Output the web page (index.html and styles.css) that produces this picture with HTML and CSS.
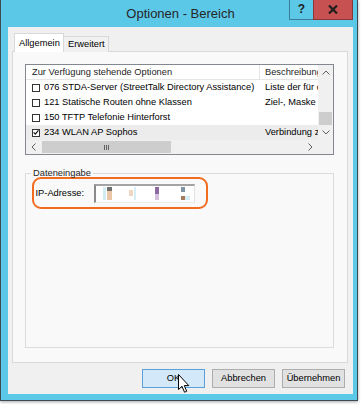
FILE: index.html
```html
<!DOCTYPE html>
<html lang="de">
<head>
<meta charset="utf-8">
<title>Optionen - Bereich</title>
<link rel="stylesheet" href="styles.css">
</head>
<body>
<div class="window">
  <div class="titlebar">
    <span class="title">Optionen - Bereich</span>
    <div class="caption">
      <div class="cap-help">?</div>
      <div class="cap-close">
        <svg width="10" height="9" viewBox="0 0 10 9"><path d="M1 0.5 L9 8.5 M9 0.5 L1 8.5" stroke="#1e1e1e" stroke-width="2.2"/></svg>
      </div>
    </div>
  </div>
  <div class="client">
    <div class="tabs">
      <div class="tab active">Allgemein</div>
      <div class="tab">Erweitert</div>
    </div>
    <div class="panel">
      <div class="list">
        <div class="list-main">
          <div class="lv-row lv-header">
            <div class="c1 hc">Zur Verfügung stehende Optionen</div>
            <div class="c2">Beschreibung</div>
          </div>
          <div class="lv-row">
            <div class="c1"><span class="cb"></span>076 STDA-Server (StreetTalk Directory Assistance)</div>
            <div class="c2">Liste der für die</div>
          </div>
          <div class="lv-row">
            <div class="c1"><span class="cb"></span>121 Statische Routen ohne Klassen</div>
            <div class="c2">Ziel-, Maske und</div>
          </div>
          <div class="lv-row">
            <div class="c1"><span class="cb"></span>150 TFTP Telefonie Hinterforst</div>
            <div class="c2"></div>
          </div>
          <div class="lv-row sel">
            <div class="c1"><span class="cb checked"><svg width="7" height="7" viewBox="0 0 7 7"><path d="M0.8 3.4 L2.7 5.4 L6.3 1" stroke="#111" stroke-width="1.4" fill="none"/></svg></span>234 WLAN AP Sophos</div>
            <div class="c2">Verbindung zum</div>
          </div>
        </div>
        <div class="vscroll">
          <div class="sb-btn"><svg width="8" height="5" viewBox="0 0 8 5"><path d="M0.5 4.5 L4 1 L7.5 4.5" stroke="#606060" fill="none"/></svg></div>
          <div class="v-track"><div class="v-thumb"></div></div>
          <div class="sb-btn"><svg width="8" height="5" viewBox="0 0 8 5"><path d="M0.5 0.5 L4 4 L7.5 0.5" stroke="#606060" fill="none"/></svg></div>
        </div>
        <div class="hscroll">
          <div class="sb-btn h"><svg width="5" height="8" viewBox="0 0 5 8"><path d="M4.5 0.5 L1 4 L4.5 7.5" stroke="#606060" fill="none"/></svg></div>
          <div class="h-thumb"><span class="grip"></span><span class="grip"></span><span class="grip"></span></div>
          <div class="h-track"></div>
          <div class="sb-btn h"><svg width="5" height="8" viewBox="0 0 5 8"><path d="M0.5 0.5 L4 4 L0.5 7.5" stroke="#606060" fill="none"/></svg></div>
        </div>
        <div class="corner"></div>
      </div>
      <fieldset class="group">
        <legend>Dateneingabe</legend>
        <div class="highlight">
          <label class="ip-label">IP-Adresse:</label>
          <div class="ip-input">
            <span class="blk b1"></span><span class="blk b2"></span><span class="blk b3"></span><span class="blk b4"></span><span class="blk b5"></span><span class="blk b6"></span><span class="blk b7"></span>
          </div>
        </div>
      </fieldset>
    </div>
    <div class="actions">
      <div class="btn default">OK</div>
      <div class="btn">Abbrechen</div>
      <div class="btn">Übernehmen</div>
    </div>
  </div>
</div>
<svg class="cursor" width="13" height="20" viewBox="0 0 13 20"><path d="M0.5 0.5 L0.5 15.5 L4 12.3 L6.5 18.2 L8.7 17.3 L6.3 11.6 L10.8 11.6 Z" fill="#fff" stroke="#000" stroke-linejoin="miter"/></svg>
</body>
</html>
```

FILE: styles.css
```css
* { box-sizing: border-box; }

body {
  margin: 0;
  width: 361px;
  height: 404px;
  overflow: hidden;
  background: #fff;
  font-family: "Liberation Sans", Arial, sans-serif;
  font-size: 9.3px;
  color: #000;
  position: relative;
}

.window {
  width: 358px;
  height: 401px;
  background: #5cc8e8;
  border: 1px solid #3d4b52;
  border-top: 0;
  padding: 0 4px 6px 7px;
  display: flex;
  flex-direction: column;
  box-shadow: 0 1px 3px rgba(0, 0, 0, 0.35);
}

.titlebar {
  height: 27px;
  flex: none;
  display: grid;
  grid-template-columns: 1fr auto 1fr;
  align-items: start;
}

.title {
  grid-column: 2;
  font-size: 13px;
  line-height: 28px;
  color: #262626;
  white-space: nowrap;
}

.caption {
  grid-column: 3;
  justify-self: end;
  display: flex;
}

.cap-help {
  width: 24px;
  height: 20px;
  border: 1px solid #3a7f98;
  border-top: 0;
  border-right: 0;
  font-weight: bold;
  font-size: 12px;
  line-height: 18px;
  text-align: center;
  color: #1e1e1e;
}

.cap-close {
  width: 40px;
  height: 20px;
  background: #c75050;
  border: 1px solid #8d3636;
  border-top: 0;
  display: flex;
  align-items: center;
  justify-content: center;
}

.client {
  flex: 1;
  background: #f0f0f0;
  padding: 6px 5px 0 4px;
  display: flex;
  flex-direction: column;
}

.tabs {
  display: flex;
  align-items: flex-end;
  height: 19px;
  padding-left: 2px;
  margin-bottom: -1px;
  position: relative;
  z-index: 1;
}

.tab {
  height: 16px;
  border: 1px solid #d9d9d9;
  border-bottom: 0;
  background: #f0f0f0;
  padding: 0 3px 0 4px;
  line-height: 15px;
  white-space: nowrap;
}

.tab.active {
  height: 19px;
  width: 50px;
  background: #fff;
  line-height: 18px;
}

.tab + .tab {
  margin-left: -1px;
  width: 46px;
}

.panel {
  height: 312px;
  flex: none;
  border: 1px solid #d9d9d9;
  background: #f9f9f9;
  padding: 12px 13px 0 12px;
  display: flex;
  flex-direction: column;
}

.list {
  height: 91px;
  flex: none;
  border: 1px solid #828790;
  background: #fff;
  display: grid;
  grid-template-columns: 1fr 15px;
  grid-template-rows: 75px 14px;
}

.list-main {
  overflow: hidden;
  grid-column: 1;
  grid-row: 1;
}

.lv-row {
  display: grid;
  grid-template-columns: 234px 1fr;
  height: 15px;
  line-height: 15px;
  white-space: nowrap;
}

.lv-row .c1 {
  display: flex;
  align-items: center;
  gap: 4px;
  padding-left: 6px;
  overflow: hidden;
}

.lv-row .c2 {
  padding-left: 5px;
  overflow: hidden;
}

.lv-header {
  border-bottom: 1px solid #e5e5e5;
  color: #1e1e1e;
}

.lv-header .c1 {
  border-right: 1px solid #e5e5e5;
}

.lv-row.sel {
  background: #ececec;
}

.cb {
  width: 8px;
  height: 8px;
  flex: none;
  border: 1px solid #333;
  background: #fff;
  display: flex;
  align-items: center;
  justify-content: center;
}

.vscroll {
  grid-column: 2;
  grid-row: 1;
  background: #f0f0f0;
  display: flex;
  flex-direction: column;
}

.sb-btn {
  height: 15px;
  flex: none;
  display: flex;
  align-items: center;
  justify-content: center;
}

.sb-btn.h {
  width: 15px;
  height: 14px;
}

.v-track {
  flex: 1;
  display: flex;
  flex-direction: column;
  justify-content: flex-end;
}

.v-thumb {
  height: 13px;
  background: #cdcdcd;
  margin: 0 1px;
}

.hscroll {
  grid-column: 1;
  grid-row: 2;
  background: #f0f0f0;
  display: flex;
}

.h-thumb {
  width: 129px;
  margin: 1px 0 1px 1px;
  background: #cdcdcd;
  display: flex;
  align-items: center;
  justify-content: center;
  gap: 1px;
}

.grip {
  width: 1px;
  height: 5px;
  background: #606060;
}

.h-track {
  flex: 1;
}

.corner {
  grid-column: 2;
  grid-row: 2;
  background: #f0f0f0;
}

.group {
  margin: 12px 0 0;
  height: 181px;
  padding: 0 0 0 6px;
  border: 1px solid #dcdcdc;
  min-inline-size: 0;
}

.group legend {
  margin-left: -1px;
  padding: 0 2px;
  line-height: 12px;
  color: #1e1e1e;
}

.highlight {
  margin-top: -2px;
  width: 176px;
  height: 32px;
  border: 2.5px solid #f26c1f;
  border-radius: 9px;
  display: flex;
  align-items: center;
  padding-left: 1.5px;
  gap: 10px;
}

.ip-label {
  white-space: nowrap;
}

.ip-input {
  width: 101px;
  height: 19px;
  background: #fff;
  border-top: 2px solid #a3a3a3;
  border-left: 2px solid #8a8a8a;
  border-right: 1px solid #e2e2e2;
  border-bottom: 1px solid #ececec;
  display: flex;
  align-items: flex-start;
  padding-top: 1px;
}

.blk {
  height: 13px;
  flex: none;
}

.b1 { margin-left: 7px; width: 3px; background: #d3ecf4; }
.b2 { margin-left: 1px; width: 5px; background: linear-gradient(#707070 0 4px, #e9c6a6 4px); }
.b3 { margin-left: 17px; width: 4px; background: linear-gradient(#fff 0 3px, #efd6c0 3px 9px, #fff 9px); }
.b4 { margin-left: 1px; width: 2px; background: #d6eef6; }
.b5 { margin-left: 19px; width: 4px; background: linear-gradient(#8c6aa0 0 7px, #d4c0dc 7px); }
.b6 { margin-left: 22px; width: 4px; background: linear-gradient(#8094a8 0 5px, #fff 5px 9px, #a87a5c 9px); }
.b7 { width: 5px; background: linear-gradient(#fff 0 9px, #d5eef6 9px); }

.actions {
  display: flex;
  justify-content: flex-end;
  gap: 7px;
  margin-top: 6px;
  padding-right: 3px;
}

.btn {
  width: 63px;
  height: 19px;
  border: 1px solid #adadad;
  background: #e1e1e1;
  text-align: center;
  line-height: 17px;
  white-space: nowrap;
}

.btn.default {
  background: #d3e9fa;
  border-color: #5a9fd8;
}

.cursor {
  position: absolute;
  left: 178px;
  top: 374px;
}
```
